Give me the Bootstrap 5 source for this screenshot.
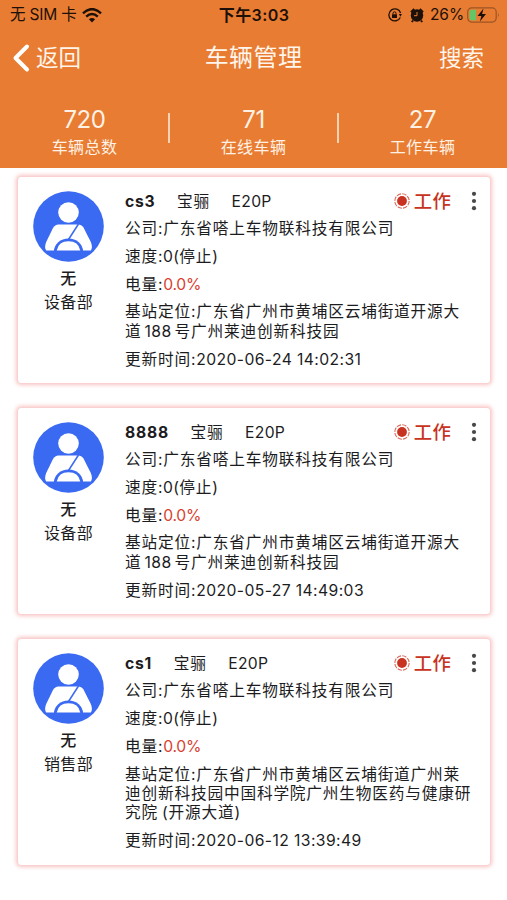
<!DOCTYPE html>
<html lang="zh-CN">
<head>
<meta charset="utf-8">
<meta name="viewport" content="width=device-width, initial-scale=1">
<title>车辆管理</title>
<link href="https://cdn.jsdelivr.net/npm/bootstrap@5.3.0/dist/css/bootstrap.min.css" rel="stylesheet">
<style>
body{font-family:Inter,"Noto Sans CJK SC",sans-serif;color:#1c1c1e;background:#fff;overflow:hidden;height:900px}
svg{display:block;flex:none}
.app-head{background:#e87c32;height:168px}
.status{height:30px;color:#1d1008;font-size:15.5px;padding:0 7px 0 10px;line-height:30px}
.status .side{flex:1 1 0}
.status .sim{font-size:15.5px;letter-spacing:-.2px;margin-right:6px}
.status .clock{font-weight:600;font-size:16px;letter-spacing:.4px;margin-right:2px}
.status .charge{margin:0 3px 0 6px;letter-spacing:-.1px}
.titlebar{height:56px;color:#fff5ec;font-size:22.5px;line-height:56px;padding:0 23px 0 12px}
.titlebar .side{flex:1 1 0}
.titlebar .ttl{font-size:24px;letter-spacing:.4px;margin-right:-11px}
.titlebar .back{margin-left:5px}
.stats{height:82px;color:#fff1e4}
.stats .cell{width:169px;padding-top:19px}
.stats .num{font-size:24px;line-height:30px;letter-spacing:-.4px}
.stats .lbl{font-size:16px;line-height:20px;letter-spacing:.4px;margin-top:2px}
.stats .bar{width:2px;height:30px;background:#f8d2b3;margin:27px -1px 0 -1px}
.vehicles{padding:8px 16px 0 17px;gap:23.2px}
.vehicle{border-radius:4px;border:1px solid #fbd0d0;box-shadow:0 0 4px 1px #f9c3c3;padding:14.6px 14px 14px 15px;background:#fff}
.who{width:71px;margin:-.4px 21px 0 0;font-size:16px;line-height:24px;letter-spacing:.3px}
.who svg{margin-bottom:3.6px}
.info{gap:8.3px;font-size:15.7px;line-height:19.4px;letter-spacing:.8px;white-space:nowrap}
.info .topline{height:19.4px}
.la{letter-spacing:.4px}
.plate{font-weight:700;letter-spacing:.8px}
.maker{margin-left:21.500px}
.model{margin-left:21.500px;letter-spacing:.3px}
.state{color:#c83220;font-size:18.4px;font-weight:500;letter-spacing:.2px;margin-left:4px}
.dots{margin:-1px -1px 0 20px}
.house{margin:0 3px 0 3px}
.pct{color:#d9412f;letter-spacing:-.3px}
</style>
</head>
<body>
<svg width="0" height="0" class="position-absolute">
<symbol id="driver" viewBox="0 0 71 71"><circle cx="35.500" cy="35.500" r="35.300" fill="#3a69f2"/><circle cx="35.500" cy="21.500" r="10.300" fill="#fff"/><path d="M25.500 33.500H45q3.500 0 5.500 3L57.800 51q2.200 5 0 8.500H13.200q-2.200-3.500 0-8.500L20 37q2-3.500 5.500-3.500z" fill="#fff"/><path d="M21 60.200a14.500 12.700 0 0 1 29 0z" fill="#3a69f2"/><path d="M23.700 59.500Q25.500 50.300 35.500 50.300T47.300 59.500z" fill="#fff"/><path d="M45.500 33 35.500 48.500" stroke="#3a69f2" stroke-width="1.500"/></symbol>
<symbol id="live" viewBox="0 0 16 16"><circle cx="8" cy="8" r="4.900" fill="#c83220"/><circle cx="8" cy="8" r="7.200" fill="none" stroke="#d66a5b" stroke-width="1.100" stroke-dasharray="4.500 1.150"/></symbol>
<symbol id="more" viewBox="0 0 6 20"><g fill="#48484a"><circle cx="3" cy="2.800" r="2.100"/><circle cx="3" cy="10" r="2.100"/><circle cx="3" cy="17.200" r="2.100"/></g></symbol>
</svg>
<header class="app-head">
<div class="status d-flex align-items-center">
<div class="side d-flex align-items-center"><span class="sim">无 SIM 卡</span><svg width="20" height="15" viewBox="0 0 20 15"><g fill="none" stroke="#1d1008" stroke-width="2.500"><path d="M1 5.300Q10-3 19 5.300"/><path d="M4.200 8.700Q10 3.400 15.800 8.700"/></g><path d="M6.900 11.300Q10 8.500 13.100 11.300L10 14.500z" fill="#1d1008"/></svg></div>
<div class="clock">下午3:03</div>
<div class="side d-flex align-items-center justify-content-end">
<svg width="14" height="14" viewBox="0 0 14 14"><path d="M12.300 9.500A6 6 0 1 1 12.600 5" fill="none" stroke="#1d1008" stroke-width="1.300"/><path d="M10.900 6h3l-1.500 2.800z" fill="#1d1008"/><rect x="4" y="6.200" width="5" height="3.900" rx=".6" fill="#1d1008"/><path d="M5 6.500V5.300a1.500 1.500 0 0 1 3 0v1.200" fill="none" stroke="#1d1008"/></svg>
<svg class="ms-2" width="14" height="15" viewBox="0 0 14 15"><circle cx="7" cy="7.500" r="6.200" fill="#1d1008"/><path d="M1 4.200 4.200 1M13 4.200 9.800 1M3 12.500l-1.200 1.500M11 12.500l1.200 1.500" stroke="#1d1008" stroke-width="2"/><path d="M7 4v3.700H4" fill="none" stroke="#e87c32" stroke-width="1"/></svg>
<span class="charge">26%</span>
<svg width="33" height="16" viewBox="0 0 33 16"><rect x=".7" y=".9" width="28.500" height="14.200" rx="4" fill="none" stroke="#9c5424" stroke-width="1.200"/><path d="M31 5.800q1.800 2.200 0 4.400z" fill="#9c5424"/><path d="M5 2.800h4v10.400H5q-2.500 0-2.500-2.500V5.300Q2.500 2.800 5 2.800z" fill="#65c466"/><path d="M16.500 1.500 10.500 9h3.900l-1.500 5.500L19 7h-3.900z" fill="#1d1008"/></svg>
</div>
</div>
<div class="titlebar d-flex align-items-center">
<div class="side d-flex align-items-center"><svg width="19" height="30" viewBox="0 0 19 30"><path d="M15 3.500 3.500 15 15 26.500" fill="none" stroke="#fff" stroke-width="4" stroke-linecap="round" stroke-linejoin="round"/></svg><span class="back">返回</span></div>
<div class="ttl">车辆管理</div>
<div class="side text-end">搜索</div>
</div>
<div class="stats d-flex text-center">
<div class="cell"><div class="num">720</div><div class="lbl">车辆总数</div></div><div class="bar"></div>
<div class="cell"><div class="num">71</div><div class="lbl">在线车辆</div></div><div class="bar"></div>
<div class="cell"><div class="num">27</div><div class="lbl">工作车辆</div></div>
</div>
</header>
<main class="vehicles d-flex flex-column">
<article class="vehicle d-flex">
<div class="who text-center"><svg width="71" height="71"><use href="#driver"/></svg><div class="fw-medium">无</div><div>设备部</div></div>
<div class="info d-flex flex-column flex-grow-1">
<div class="topline d-flex align-items-center"><span class="plate">cs3</span><span class="maker">宝骊</span><span class="model">E20P</span><svg class="ms-auto" width="16" height="16"><use href="#live"/></svg><span class="state">工作</span><svg class="dots" width="6" height="20"><use href="#more"/></svg></div>
<div>公司:广东省嗒上车物联科技有限公司</div>
<div>速度<span class="la">:0(</span>停止<span class="la">)</span></div>
<div>电量:<span class="pct">0.0%</span></div>
<div>基站定位:广东省广州市黄埔区云埔街道开源大<br>道<span class="la house">188</span>号广州莱迪创新科技园</div>
<div>更新时间:<span class="la">2020-06-24 14:02:31</span></div>
</div>
</article>
<article class="vehicle d-flex">
<div class="who text-center"><svg width="71" height="71"><use href="#driver"/></svg><div class="fw-medium">无</div><div>设备部</div></div>
<div class="info d-flex flex-column flex-grow-1">
<div class="topline d-flex align-items-center"><span class="plate">8888</span><span class="maker">宝骊</span><span class="model">E20P</span><svg class="ms-auto" width="16" height="16"><use href="#live"/></svg><span class="state">工作</span><svg class="dots" width="6" height="20"><use href="#more"/></svg></div>
<div>公司:广东省嗒上车物联科技有限公司</div>
<div>速度<span class="la">:0(</span>停止<span class="la">)</span></div>
<div>电量:<span class="pct">0.0%</span></div>
<div>基站定位:广东省广州市黄埔区云埔街道开源大<br>道<span class="la house">188</span>号广州莱迪创新科技园</div>
<div>更新时间:<span class="la">2020-05-27 14:49:03</span></div>
</div>
</article>
<article class="vehicle d-flex">
<div class="who text-center"><svg width="71" height="71"><use href="#driver"/></svg><div class="fw-medium">无</div><div>销售部</div></div>
<div class="info d-flex flex-column flex-grow-1">
<div class="topline d-flex align-items-center"><span class="plate">cs1</span><span class="maker">宝骊</span><span class="model">E20P</span><svg class="ms-auto" width="16" height="16"><use href="#live"/></svg><span class="state">工作</span><svg class="dots" width="6" height="20"><use href="#more"/></svg></div>
<div>公司:广东省嗒上车物联科技有限公司</div>
<div>速度<span class="la">:0(</span>停止<span class="la">)</span></div>
<div>电量:<span class="pct">0.0%</span></div>
<div>基站定位:广东省广州市黄埔区云埔街道广州莱<br>迪创新科技园中国科学院广州生物医药与健康研<br>究院<span class="ms-1">(</span>开源大道)</div>
<div>更新时间:<span class="la">2020-06-12 13:39:49</span></div>
</div>
</article>
</main>
<script src="https://cdn.jsdelivr.net/npm/bootstrap@5.3.0/dist/js/bootstrap.bundle.min.js"></script>
</body>
</html>
